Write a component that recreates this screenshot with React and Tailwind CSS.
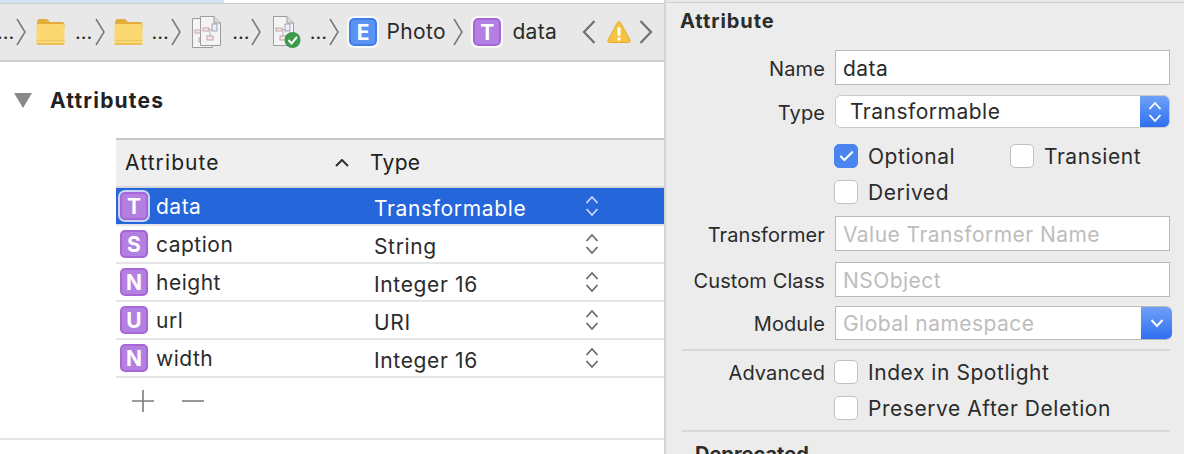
import { Check } from "lucide-react";

const attributes = [
  { letter: "T", name: "data", type: "Transformable", selected: true },
  { letter: "S", name: "caption", type: "String" },
  { letter: "N", name: "height", type: "Integer 16" },
  { letter: "U", name: "url", type: "URI" },
  { letter: "N", name: "width", type: "Integer 16" },
];

function Chevron({ dir = "right", className = "" }) {
  return (
    <svg width="10" height="28" viewBox="0 0 10 28" className={"shrink-0 " + className}>
      <path
        d={dir === "right" ? "M1 1 L9 14 L1 27" : "M9 1 L1 14 L9 27"}
        fill="none"
        stroke="#777"
        strokeWidth="1.5"
      />
    </svg>
  );
}

function Dots() {
  return <span className="w-4 shrink-0 text-center text-[20px] leading-none text-[#2b2b2b]">…</span>;
}

function Folder() {
  return (
    <svg width="29" height="28" viewBox="0 0 29 28" className="shrink-0">
      <path d="M1 5 Q1 1 4 1 H10 Q12 1 13 3 L14 4 H26 Q28.5 4 28.5 7 V10 H1 Z" fill="#e2ad3b" />
      <rect x="0.5" y="6" width="28" height="21" rx="2.5" fill="#fbd872" />
      <rect x="0.5" y="22" width="28" height="1" fill="#eec463" />
      <rect x="0.5" y="25" width="28" height="2" rx="1" fill="#eebf58" />
    </svg>
  );
}

function DocPage({ x = 0 }) {
  return (
    <g transform={`translate(${x} 0)`}>
      <path d="M0.5 0.5 H14 L20.5 7 V29.5 H0.5 Z" fill="#f4f4f4" stroke="#9d9d9d" />
      <path d="M14 0.5 V7 H20.5" fill="#dcdcdc" stroke="#9d9d9d" />
      <rect x="3" y="12" width="6" height="3" fill="#f7e9e9" stroke="#c08d96" strokeWidth="0.8" />
      <rect x="12" y="8" width="5" height="7" fill="#ececf4" stroke="#8f93a8" strokeWidth="0.8" />
      <rect x="7" y="20" width="6" height="4" fill="#f7e9e9" stroke="#c08d96" strokeWidth="0.8" />
      <path d="M9 13.5 H12 M10 15 V20" stroke="#8f93a8" strokeWidth="0.7" />
    </g>
  );
}

function DocStack() {
  return (
    <svg width="30" height="32" viewBox="0 0 30 32" className="shrink-0">
      <g transform="translate(0 2)">
        <DocPage x={0} />
      </g>
      <DocPage x={8} />
    </svg>
  );
}

function DocCheck() {
  return (
    <svg width="30" height="32" viewBox="0 0 30 32" className="shrink-0">
      <DocPage x={0} />
      <circle cx="19.5" cy="24" r="8" fill="#3d9a4b" />
      <path d="M15.5 24 L18.5 27.5 L24 21" fill="none" stroke="#fff" strokeWidth="2" />
    </svg>
  );
}

function EntityIcon({ letter, color = "purple", selected = false, size = "md" }) {
  const fill = color === "blue" ? "bg-[#5b93f5] border-[#3f7cec]" : "bg-[#b37fe0] border-[#a566d8]";
  return (
    <span
      className={
        "flex h-7 w-7 shrink-0 items-center justify-center rounded-[5px] border-2 font-bold text-[21px] leading-none text-white " +
        fill +
        (selected ? " outline-2 outline-[#c9d5f3]" : "") +
        (size === "bar" ? " outline-2 outline-white/80" : "")
      }
    >
      {letter}
    </span>
  );
}

function UpDown({ stroke = "#6b6b6b" }) {
  return (
    <svg width="14" height="22" viewBox="0 0 14 22" className="shrink-0">
      <path d="M1.5 8 L7 2 L12.5 8 M1.5 14 L7 20 L12.5 14" fill="none" stroke={stroke} strokeWidth="1.8" />
    </svg>
  );
}

function Warning() {
  return (
    <svg width="24" height="24" viewBox="0 0 24 24" className="shrink-0">
      <path d="M12 1.5 Q13 1.5 13.6 2.6 L23 20 Q23.8 22.5 21.5 22.5 H2.5 Q0.2 22.5 1 20 L10.4 2.6 Q11 1.5 12 1.5 Z" fill="#f6c444" stroke="#e3ab2e" />
      <rect x="10.5" y="7" width="3" height="9" rx="1.5" fill="#fff" />
      <circle cx="12" cy="19" r="1.7" fill="#fff" />
    </svg>
  );
}

function Breadcrumbs() {
  return (
    <div className="flex h-14 shrink-0 items-center text-[21px] tracking-[0.3px] text-[#2b2b2b]">
      <span className="-ml-[3px] w-4 shrink-0 text-center text-[20px] leading-none">…</span>
      <Chevron className="ml-[3px]" />
      <div className="ml-[10px]"><Folder /></div>
      <div className="ml-[10px]"><Dots /></div>
      <Chevron className="ml-[2px]" />
      <div className="ml-[9px]"><Folder /></div>
      <div className="ml-[9px]"><Dots /></div>
      <Chevron className="ml-[2px]" />
      <div className="ml-[11px]"><DocStack /></div>
      <div className="ml-[10px]"><Dots /></div>
      <Chevron className="ml-[1px]" />
      <div className="ml-[12px]"><DocCheck /></div>
      <div className="ml-[7px]"><Dots /></div>
      <Chevron className="ml-[2px]" />
      <div className="ml-[10px]"><EntityIcon letter="E" color="blue" size="bar" /></div>
      <span className="ml-[9px] w-[60px] shrink-0 tracking-[0.4px]">Photo</span>
      <Chevron className="ml-[7px]" />
      <div className="ml-[10px]"><EntityIcon letter="T" size="bar" /></div>
      <span className="ml-[11px] w-[45px] shrink-0">data</span>
      <svg width="14" height="26" viewBox="0 0 14 26" className="ml-[25px] shrink-0">
        <path d="M12.5 2 L2 13 L12.5 24" fill="none" stroke="#6f6f6f" strokeWidth="2.2" />
      </svg>
      <div className="ml-[11px]"><Warning /></div>
      <svg width="14" height="26" viewBox="0 0 14 26" className="ml-[8px] shrink-0">
        <path d="M1.5 2 L12 13 L1.5 24" fill="none" stroke="#6f6f6f" strokeWidth="2.2" />
      </svg>
    </div>
  );
}

function AttributeRow({ letter, name, type, selected }) {
  return (
    <div className="border-b-2 border-[#e6e6e6]">
      <div className={"flex h-9 items-center pl-1 " + (selected ? "bg-[#2566db] text-white" : "text-[#2b2b2b]")}>
        <EntityIcon letter={letter} selected={selected} />
        <span className="ml-2 w-[218px] translate-y-px tracking-[0.5px]">{name}</span>
        <span className="w-[211px] translate-y-[3px] tracking-[0.65px]">{type}</span>
        <UpDown stroke={selected ? "#c9d9f7" : "#6b6b6b"} />
      </div>
    </div>
  );
}

function AttributesPane() {
  return (
    <div className="flex w-[664px] shrink-0 flex-col bg-white">
      <div className="h-[3px] w-[224px] shrink-0 bg-[#d5e3f5]" />
      <div className="h-px shrink-0 bg-[#d0d0d0]" />
      <div className="bg-[#e8e8e8]">
        <Breadcrumbs />
      </div>
      <div className="h-0.5 shrink-0 bg-[#d0d0d0]" />

      <div className="flex h-[76px] shrink-0 items-start pt-[28px]">
        <svg width="18" height="16" viewBox="0 0 18 16" className="ml-[14px] mt-[3px] shrink-0">
          <path d="M0 0 H18 L9 15 Z" fill="#8a8a8a" />
        </svg>
        <span className="ml-[19px] -translate-x-px text-[21px] font-bold leading-[22px] tracking-[1.2px] text-[#222]">Attributes</span>
      </div>

      <div className="ml-[116px]">
        <div className="h-0.5 bg-[#c8c8c8]" />
        <div className="flex h-[46px] items-center bg-[#efefef] pl-[9px] text-[21px] text-[#222]">
          <span className="w-[210px] tracking-[1.1px]">Attribute</span>
          <svg width="14" height="8" viewBox="0 0 14 8" className="shrink-0">
            <path d="M1 7 L7 1 L13 7" fill="none" stroke="#2f2f2f" strokeWidth="2" />
          </svg>
          <span className="ml-[22px] -translate-x-px tracking-[0.3px]">Type</span>
        </div>
        <div className="h-0.5 bg-[#d6d6d6]" />
        <div className="text-[21px]">
          {attributes.map((a) => (
            <AttributeRow key={a.name} {...a} />
          ))}
        </div>
        <div className="flex h-[46px] items-center pl-4">
          <svg width="22" height="22" viewBox="0 0 22 22" className="shrink-0">
            <path d="M0 11 H22 M11 0 V22" stroke="#7c7c7c" strokeWidth="1.6" />
          </svg>
          <svg width="22" height="22" viewBox="0 0 22 22" className="ml-[28px] shrink-0">
            <path d="M0 11 H22" stroke="#7c7c7c" strokeWidth="1.6" />
          </svg>
        </div>
      </div>
      <div className="mt-[14px] h-0.5 shrink-0 bg-[#e6e6e6]" />
    </div>
  );
}

function Label({ children }) {
  return <span className="w-[159px] shrink-0 translate-y-px text-right text-[20px] tracking-[0.1px] text-[#2b2b2b]">{children}</span>;
}

function FieldRow({ label, children, className = "" }) {
  return (
    <div className={"flex items-center gap-[10px] " + className}>
      <Label>{label}</Label>
      {children}
    </div>
  );
}

function TextBox({ value, placeholder }) {
  return (
    <div className="flex h-[35px] w-[335px] items-center border border-[#b9b9b9] bg-white pl-[7px] tracking-[0.45px]">
      {value ? (
        <span className="translate-y-px text-[#2b2b2b]">{value}</span>
      ) : (
        <span className="translate-y-px text-[#bdbdbd]">{placeholder}</span>
      )}
    </div>
  );
}

function CheckBox({ checked }) {
  return (
    <span
      className={
        "flex h-6 w-6 shrink-0 items-center justify-center rounded-[5px] border " +
        (checked ? "border-[#4a84ee] bg-[#4a84ee]" : "border-[#c2c2c2] bg-white")
      }
    >
      {checked && <Check size={17} strokeWidth={3} color="#fff" />}
    </span>
  );
}

function CheckLabel({ checked, children, className = "" }) {
  return (
    <span className={"flex items-center gap-[10px] tracking-[0.55px] text-[#2b2b2b] " + className}>
      <CheckBox checked={checked} />
      <span className="translate-y-px">{children}</span>
    </span>
  );
}

function InspectorPane() {
  return (
    <div className="flex min-w-0 flex-1 flex-col bg-[#ececec] text-[21px]">
      <div className="h-0.5 shrink-0 bg-[#e8e8e8]" />
      <div className="h-px shrink-0 bg-[#d0d0d0]" />
      <div className="ml-[14px] mt-[6px] h-[24px] text-[20px] font-bold leading-[24px] tracking-[0.95px] text-[#2b2b2b]">Attribute</div>

      <FieldRow label="Name" className="mt-[17px]">
        <TextBox value="data" />
      </FieldRow>

      <FieldRow label="Type" className="mt-[10px]">
        <div className="flex h-[33px] w-[335px] overflow-hidden rounded-[6px] border border-[#c9c9c9] bg-white">
          <span className="flex-1 self-center pl-[14px] tracking-[0.5px] text-[#2b2b2b]">Transformable</span>
          <span className="flex w-[29px] items-center justify-center bg-gradient-to-b from-[#6fa0f7] to-[#2f6ff0]">
            <UpDown stroke="#fff" />
          </span>
        </div>
      </FieldRow>

      <div className="ml-[168px] mt-[16px] flex h-6 items-center">
        <CheckLabel checked className="w-[176px]">Optional</CheckLabel>
        <CheckLabel>Transient</CheckLabel>
      </div>
      <div className="ml-[168px] mt-3 flex h-6 items-center">
        <CheckLabel>Derived</CheckLabel>
      </div>

      <FieldRow label="Transformer" className="mt-[12px]">
        <TextBox placeholder="Value Transformer Name" />
      </FieldRow>
      <FieldRow label="Custom Class" className="mt-[11px]">
        <TextBox placeholder="NSObject" />
      </FieldRow>

      <FieldRow label="Module" className="mt-[9px]">
        <div className="flex h-[34px] w-[337px] overflow-hidden rounded-r-[6px] border-y border-l border-[#b9b9b9] bg-white">
          <span className="flex-1 translate-y-px self-center pl-[7px] tracking-[0.45px] text-[#bdbdbd]">Global namespace</span>
          <span className="flex w-[31px] items-center justify-center bg-gradient-to-b from-[#6fa0f7] to-[#2f6ff0]">
            <svg width="14" height="10" viewBox="0 0 14 10">
              <path d="M1.5 2 L7 8 L12.5 2" fill="none" stroke="#fff" strokeWidth="1.9" />
            </svg>
          </span>
        </div>
      </FieldRow>

      <div className="ml-4 mr-[14px] mt-[9px] h-0.5 shrink-0 bg-[#d8d8d8]" />

      <div className="mt-[9px] flex h-6 items-center gap-[10px]">
        <Label>Advanced</Label>
        <CheckLabel className="-ml-px">Index in Spotlight</CheckLabel>
      </div>
      <div className="ml-[168px] mt-3 flex h-6 items-center">
        <CheckLabel>Preserve After Deletion</CheckLabel>
      </div>

      <div className="ml-4 mr-[14px] mt-[10px] h-0.5 shrink-0 bg-[#d8d8d8]" />

      <div className="ml-[29px] mt-[10px] text-[20px] font-bold leading-6 text-[#2b2b2b]">Deprecated</div>
    </div>
  );
}

export default function App() {
  return (
    <div className="flex h-[454px] w-[1184px] overflow-hidden bg-white antialiased [font-family:Inter,sans-serif]">
      <AttributesPane />
      <div className="w-0.5 shrink-0 bg-[#d4d4d4]" />
      <InspectorPane />
    </div>
  );
}
